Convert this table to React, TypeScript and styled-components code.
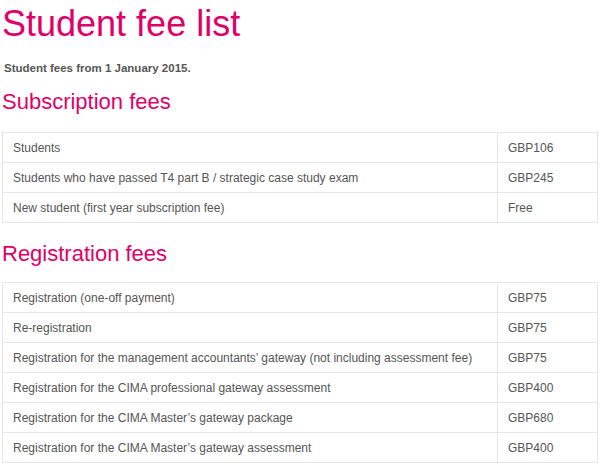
import React, { ReactElement } from "react"
import styled, { createGlobalStyle } from "styled-components"

interface Fee {
	label: string
	amount: string
}

const GlobalStyle = createGlobalStyle`
	body {
		margin: 0;
		background: #ffffff;
		font-family: "Liberation Sans", Arial, sans-serif;
	}
`

const Page = styled.div`
	padding: 0 2px 0 2px;
	color: #555555;
`

const Title = styled.h1`
	margin: 0;
	padding-top: 4px;
	font-size: 36px;
	font-weight: normal;
	line-height: 40px;
	color: #df0069;
`

const Intro = styled.p`
	margin: 17px 0 0 2px;
	font-size: 11.5px;
	font-weight: bold;
	line-height: 14px;
	color: #555555;
`

const SectionTitle = styled.h2<{ $gap: number }>`
	margin: ${(p): number => p.$gap}px 0 0 0;
	font-size: 22px;
	font-weight: normal;
	line-height: 26px;
	color: #df0069;
`

const Table = styled.table<{ $gap: number }>`
	width: 596px;
	margin-top: ${(p): number => p.$gap}px;
	border-collapse: collapse;
	font-size: 12px;
	color: #555555;
`

const Cell = styled.td<{ $amount?: boolean }>`
	height: 29px;
	padding: 0 0 0 10px;
	border: 1px solid #e6e6e6;
	vertical-align: middle;
	width: ${(p): string => (p.$amount ? "89px" : "auto")};
`

const subscriptionFees: Fee[] = [
	{ label: "Students", amount: "GBP106" },
	{ label: "Students who have passed T4 part B / strategic case study exam", amount: "GBP245" },
	{ label: "New student (first year subscription fee)", amount: "Free" },
]

const registrationFees: Fee[] = [
	{ label: "Registration (one-off payment)", amount: "GBP75" },
	{ label: "Re-registration", amount: "GBP75" },
	{
		label: "Registration for the management accountants\u2019 gateway (not including assessment fee)",
		amount: "GBP75",
	},
	{ label: "Registration for the CIMA professional gateway assessment", amount: "GBP400" },
	{ label: "Registration for the CIMA Master\u2019s gateway package", amount: "GBP680" },
	{ label: "Registration for the CIMA Master\u2019s gateway assessment", amount: "GBP400" },
]

const FeeTable = ({ fees, gap }: { fees: Fee[]; gap: number }): ReactElement => (
	<Table $gap={gap}>
		<tbody>
			{fees.map(
				(fee: Fee): ReactElement => (
					<tr key={fee.label}>
						<Cell>{fee.label}</Cell>
						<Cell $amount>{fee.amount}</Cell>
					</tr>
				),
			)}
		</tbody>
	</Table>
)

export default function App(): ReactElement {
	return (
		<>
			<GlobalStyle />
			<Page>
				<Title>Student fee list</Title>
				<Intro>Student fees from 1 January 2015.</Intro>
				<SectionTitle $gap={14}>Subscription fees</SectionTitle>
				<FeeTable fees={subscriptionFees} gap={17} />
				<SectionTitle $gap={18}>Registration fees</SectionTitle>
				<FeeTable fees={registrationFees} gap={15} />
			</Page>
		</>
	)
}
